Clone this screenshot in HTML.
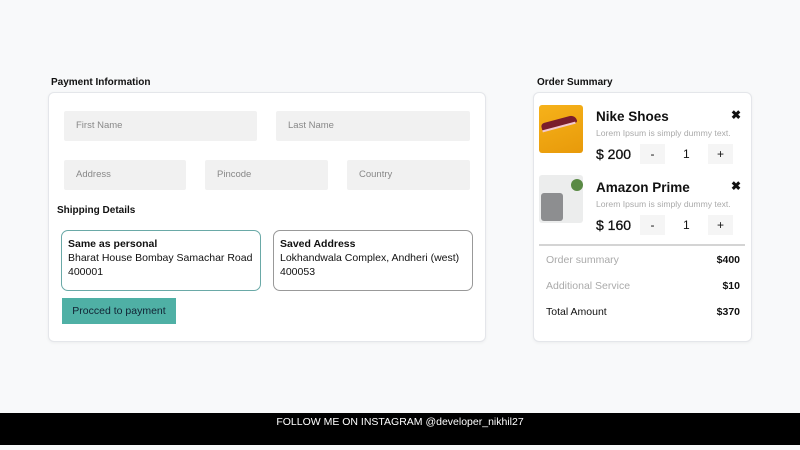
<!DOCTYPE html>
<html><head><meta charset="utf-8"><style>
*{margin:0;padding:0;box-sizing:border-box}
body{width:800px;height:450px;background:#f8f9fa;font-family:"Liberation Sans",sans-serif;position:relative;overflow:hidden;color:#111}
.a{position:absolute}
.card{position:absolute;background:#fff;border:1px solid #e4e6ea;border-radius:6px;box-shadow:0 1px 3px rgba(0,0,0,.05)}
.h{font-size:10px;font-weight:bold}
.in{position:absolute;background:#f1f1f1;font-size:9.5px;color:#888;padding-left:12px;line-height:30px;height:30px;border-radius:2px}
.box{position:absolute;border-radius:7px;background:#fff;font-size:10.5px;line-height:14px;padding:6px 6px}
.nm{font-size:13.5px;font-weight:bold;color:#111}
.lo{font-size:8.6px;color:#aaa}
.pr{font-size:14px;font-weight:normal;-webkit-text-stroke:.3px #111}
.qb{position:absolute;width:25px;height:20px;background:#f5f5f5;text-align:center;line-height:20px;font-size:12px}
.x{font-size:12px;font-weight:bold}
.r{position:absolute;left:546px;width:194px;font-size:10.5px}
.r b{position:absolute;right:0}
</style></head><body>
<div class="a h" style="left:51px;top:77px">Payment Information</div>
<div class="card" style="left:48px;top:92px;width:438px;height:250px"></div>
<div class="in" style="left:64px;top:111px;width:193px">First Name</div>
<div class="in" style="left:276px;top:111px;width:194px">Last Name</div>
<div class="in" style="left:64px;top:160px;width:122px">Address</div>
<div class="in" style="left:205px;top:160px;width:123px">Pincode</div>
<div class="in" style="left:347px;top:160px;width:123px">Country</div>
<div class="a h" style="left:57px;top:205px">Shipping Details</div>
<div class="box" style="left:61px;top:230px;width:200px;height:61px;border:1.5px solid #6aa9a7"><b>Same as personal</b><br>Bharat House Bombay Samachar Road<br>400001</div>
<div class="box" style="left:273px;top:230px;width:200px;height:61px;border:1.5px solid #999"><b>Saved Address</b><br>Lokhandwala Complex, Andheri (west)<br>400053</div>
<div class="a" style="left:62px;top:298px;width:114px;height:26px;background:#4fb0a5;font-size:10.5px;line-height:26px;text-align:center;color:#123">Procced to payment</div>

<div class="a h" style="left:537px;top:77px">Order Summary</div>
<div class="card" style="left:533px;top:92px;width:219px;height:250px"></div>
<div class="a" style="left:539px;top:105px;width:44px;height:48px;border-radius:3px;background:linear-gradient(160deg,#f6b21a,#e89a0a);overflow:hidden"><div class="a" style="left:2px;top:14px;width:36px;height:8px;background:#7a1d2c;border-radius:6px 10px 3px 3px;transform:rotate(-15deg)"></div><div class="a" style="left:3px;top:21px;width:34px;height:2px;background:#f2c8d0;transform:rotate(-15deg)"></div></div>
<div class="a" style="left:539px;top:175px;width:44px;height:48px;border-radius:3px;background:#eceded;overflow:hidden"><div class="a" style="left:2px;top:18px;width:22px;height:28px;background:#8d8e90;border-radius:3px"></div><div class="a" style="left:32px;top:4px;width:12px;height:12px;background:#5a8a45;border-radius:50%"></div></div>
<div class="a nm" style="left:596px;top:109px">Nike Shoes</div>
<div class="a x" style="left:731px;top:108px">✖</div>
<div class="a lo" style="left:596px;top:128px">Lorem Ipsum is simply dummy text.</div>
<div class="a pr" style="left:596px;top:146px">$ 200</div>
<div class="qb" style="left:640px;top:144px">-</div>
<div class="a" style="left:683px;top:147px;font-size:12px">1</div>
<div class="qb" style="left:708px;top:144px">+</div>
<div class="a nm" style="left:596px;top:180px">Amazon Prime</div>
<div class="a x" style="left:731px;top:179px">✖</div>
<div class="a lo" style="left:596px;top:199px">Lorem Ipsum is simply dummy text.</div>
<div class="a pr" style="left:596px;top:217px">$ 160</div>
<div class="qb" style="left:640px;top:215px">-</div>
<div class="a" style="left:683px;top:218px;font-size:12px">1</div>
<div class="qb" style="left:708px;top:215px">+</div>
<div class="a" style="left:539px;top:244px;width:206px;height:2px;background:#d4d4d4"></div>
<div class="r" style="top:254px;color:#aaa">Order summary<b style="color:#111">$400</b></div>
<div class="r" style="top:280px;color:#aaa">Additional Service<b style="color:#111">$10</b></div>
<div class="r" style="top:306px;color:#111">Total Amount<b>$370</b></div>

<div class="a" style="left:0;top:413px;width:800px;height:32px;background:#000;color:#fff;font-size:10.5px;text-align:center;line-height:16px;padding-top:1px">FOLLOW ME ON INSTAGRAM @developer_nikhil27</div>
</body></html>
